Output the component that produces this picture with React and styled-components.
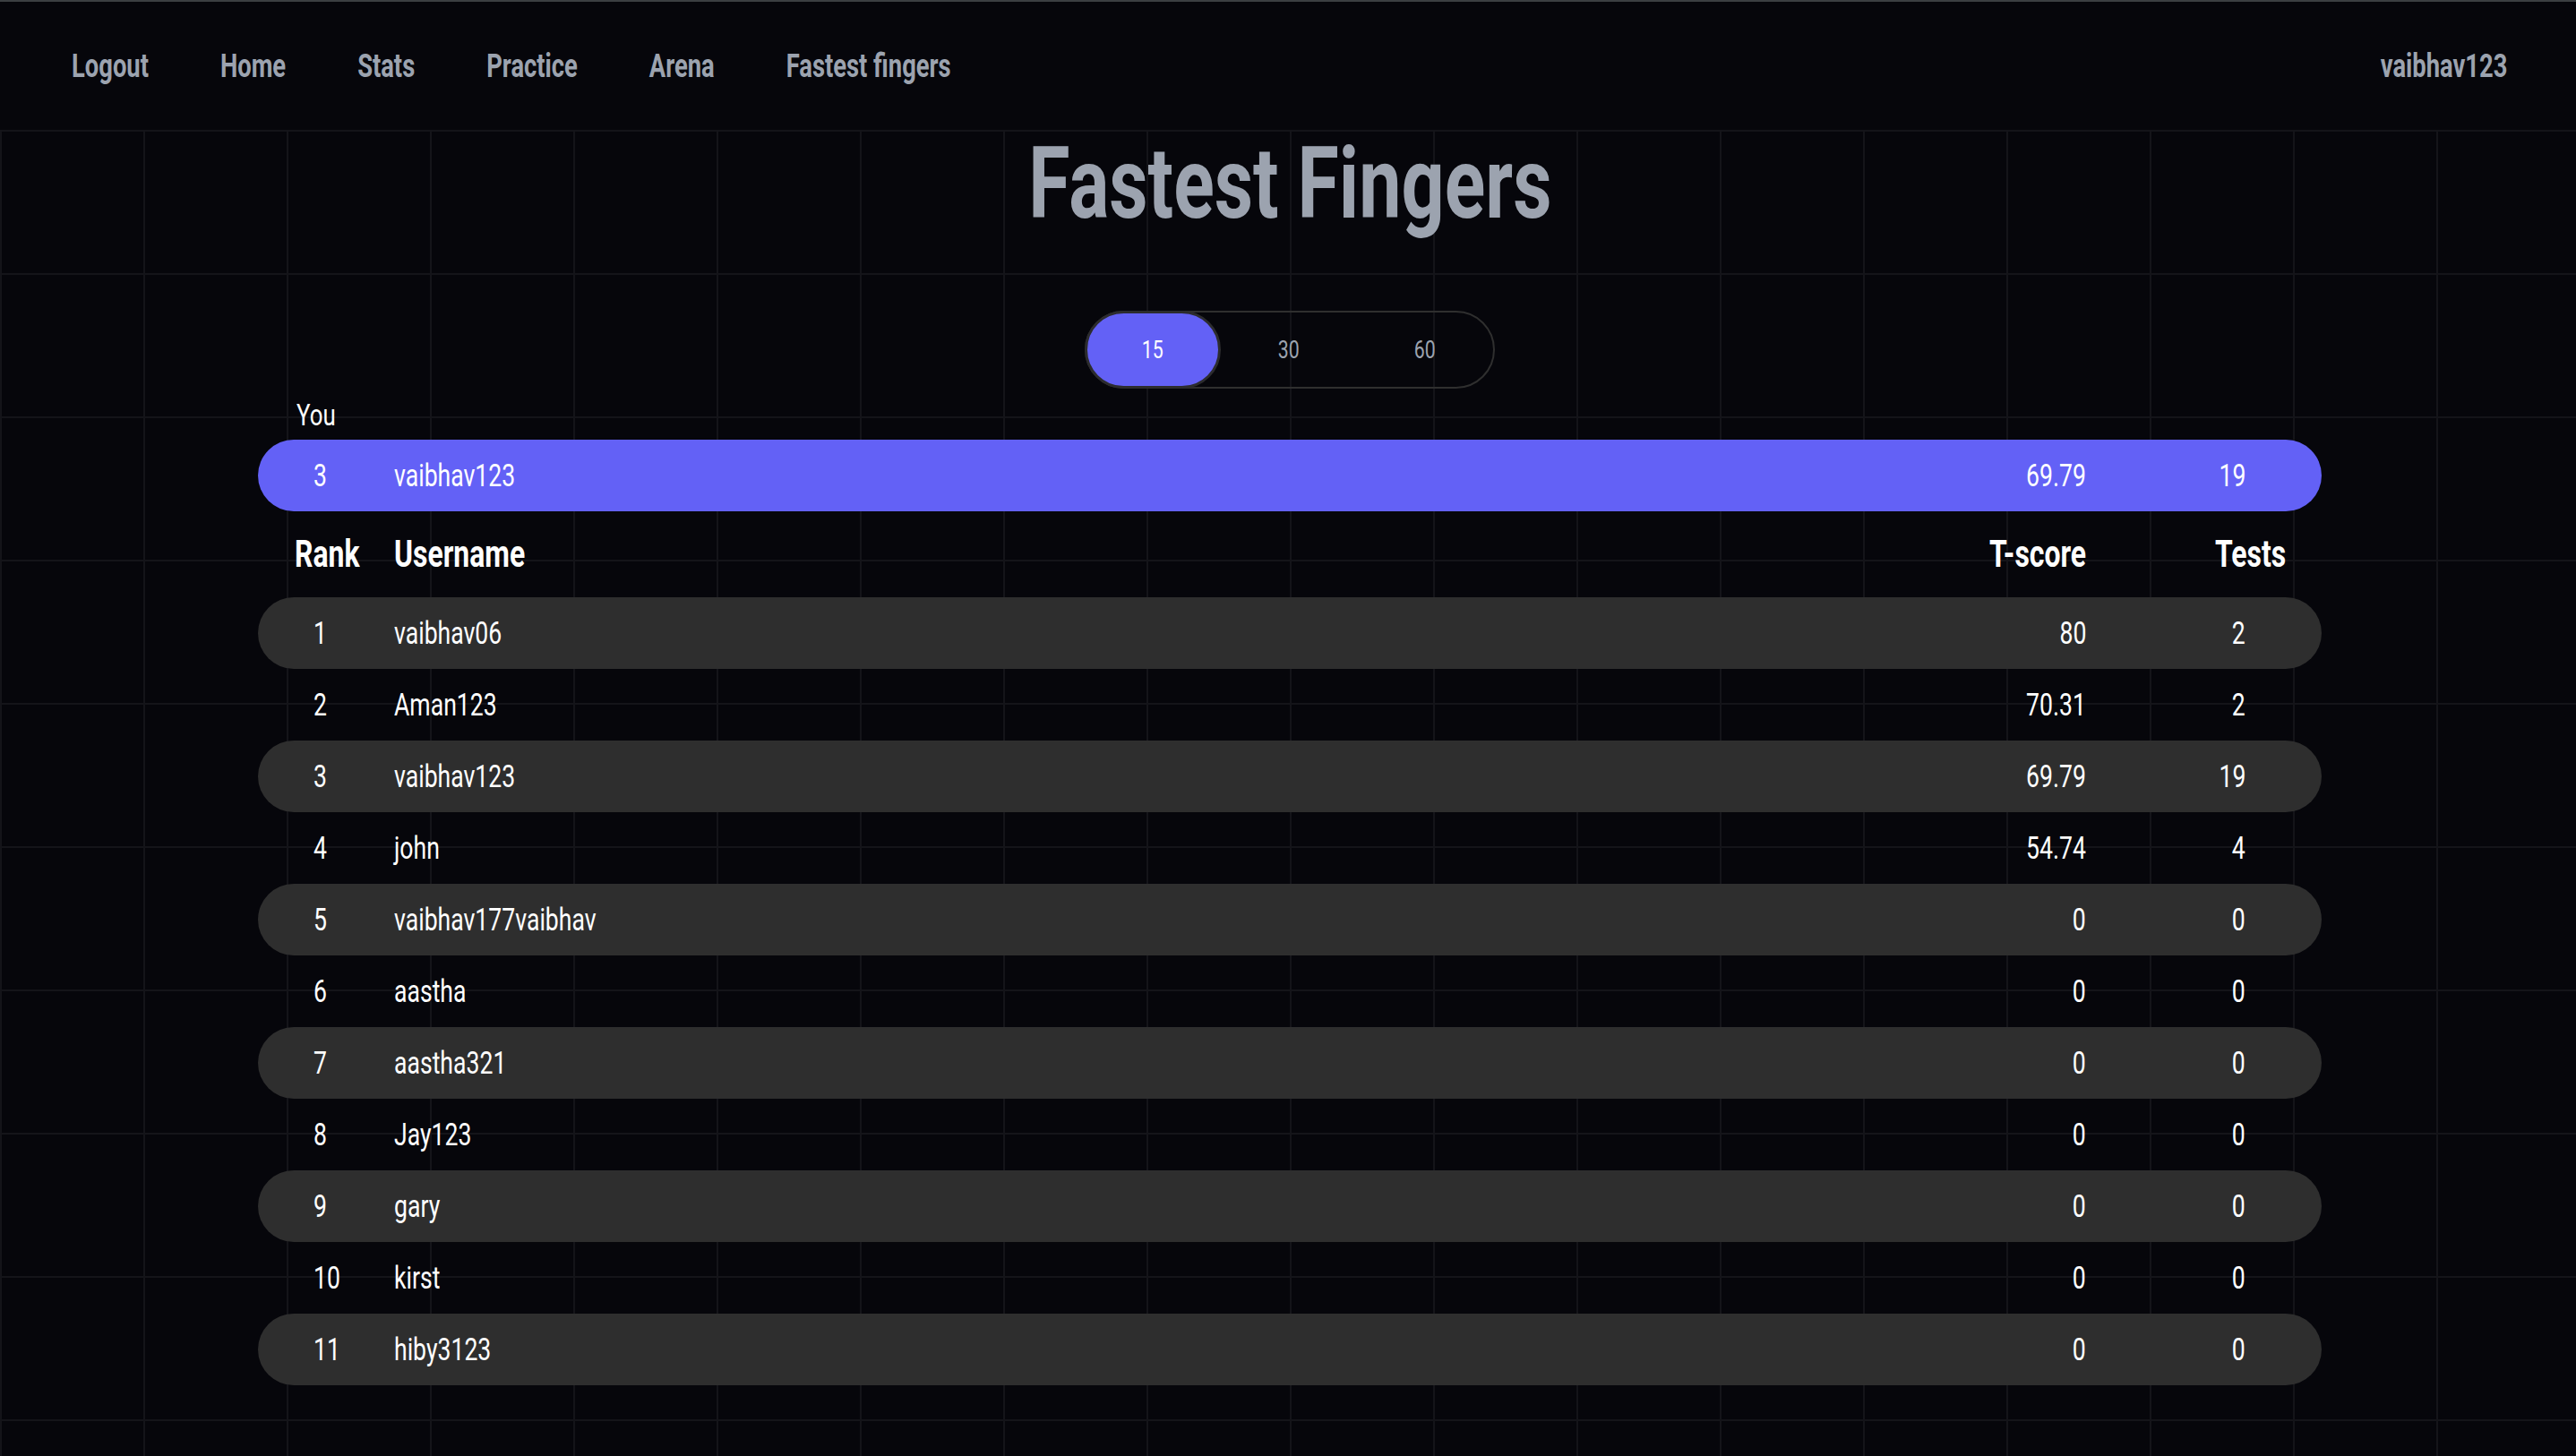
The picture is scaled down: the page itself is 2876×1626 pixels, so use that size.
import React, { useState } from "react";
import styled, { createGlobalStyle } from "styled-components";

// the original face is a very narrow display font, so Roboto gets squeezed
const SQUEEZE = 0.76;

const GlobalStyle = createGlobalStyle`
  html, body {
    margin: 0;
    padding: 0;
    background: #06060b;
  }
  body {
    font-family: Roboto, "Liberation Sans", sans-serif;
  }
`;

const Squeeze = styled.span`
  display: inline-block;
  white-space: nowrap;
  transform: scaleX(${SQUEEZE});
  transform-origin: ${(p) => p.$origin || "left"} center;
`;

const Page = styled.div`
  min-height: 100vh;
  display: flex;
  flex-direction: column;
  background: #06060b;
`;

const TopBar = styled.header`
  height: 143px;
  border-top: 2px solid #3b3f42;
  display: flex;
  align-items: center;
  justify-content: space-between;
  padding: 0 77px 0 80px;
  background: #06060b;
`;

const NavLinks = styled.nav`
  display: flex;
  gap: ${80 / SQUEEZE}px;
  transform: scaleX(${SQUEEZE});
  transform-origin: left center;
`;

const NavLink = styled.a`
  font-size: 36px;
  font-weight: 700;
  line-height: 1;
  color: #9ca3af;
  text-decoration: none;
  white-space: nowrap;
  cursor: pointer;
`;

const Main = styled.main`
  flex: 1;
  display: flex;
  flex-direction: column;
  align-items: center;
  padding: 5px 0 60px 4px;
  background-color: #06060b;
  background-image: linear-gradient(to right, #141419 2px, transparent 2px),
    linear-gradient(to bottom, #141419 2px, transparent 2px);
  background-size: 160px 160px;
`;

const Title = styled.h1`
  margin: 0;
  font-size: 111px;
  font-weight: 700;
  line-height: 1;
  color: #9ca3af;
`;

const Toggle = styled.div`
  margin-top: 86px;
  width: 454px;
  height: 83px;
  display: flex;
  border: 2px solid #2f2f2f;
  border-radius: 44px;
`;

const ToggleOption = styled.button`
  flex: none;
  width: 152px;
  height: ${(p) => (p.$active ? "87px" : "83px")};
  margin: ${(p) => (p.$active ? "-2px 0 -2px -2px" : "0")};
  display: flex;
  align-items: center;
  justify-content: center;
  padding: 0;
  border: ${(p) => (p.$active ? "3px solid #2c2c2e" : "none")};
  border-radius: 44px;
  background: ${(p) => (p.$active ? "#6361f6" : "transparent")};
  color: ${(p) => (p.$active ? "#ffffff" : "#9ca3af")};
  font-family: Roboto, sans-serif;
  font-size: 28px;
  line-height: 1;
  cursor: pointer;
`;

const Board = styled.section`
  align-self: stretch;
  margin: 12px 284px 0;
  display: flex;
  flex-direction: column;
`;

const YouLabel = styled.div`
  padding-left: 43px;
  margin-bottom: 11px;
  font-size: 34px;
  line-height: 1;
  color: #ffffff;
`;

const Row = styled.div`
  height: ${(p) => (p.$header ? "96px" : "80px")};
  display: grid;
  grid-template-columns: ${(p) =>
    p.$header ? "111px 1fr 200px 223px" : "90px 1fr 200px 178px"};
  align-items: center;
  padding: ${(p) => (p.$header ? "0 40px 0 41px" : "0 85px 0 62px")};
  border-radius: 40px;
  background: ${(p) => p.$fill || "transparent"};
  color: #ffffff;
  font-size: ${(p) => (p.$header ? "42px" : "35px")};
  font-weight: ${(p) => (p.$header ? 700 : 400)};
  line-height: 1;
`;

const Cell = styled.div`
  text-align: ${(p) => p.$align || "left"};
  white-space: nowrap;
`;

const players = [
  [1, "vaibhav06", "80", 2],
  [2, "Aman123", "70.31", 2],
  [3, "vaibhav123", "69.79", 19],
  [4, "john", "54.74", 4],
  [5, "vaibhav177vaibhav", "0", 0],
  [6, "aastha", "0", 0],
  [7, "aastha321", "0", 0],
  [8, "Jay123", "0", 0],
  [9, "gary", "0", 0],
  [10, "kirst", "0", 0],
  [11, "hiby3123", "0", 0],
];

const me = [3, "vaibhav123", "69.79", 19];

const Cells = ({ data }) => (
  <>
    <Cell>
      <Squeeze>{data[0]}</Squeeze>
    </Cell>
    <Cell>
      <Squeeze>{data[1]}</Squeeze>
    </Cell>
    <Cell $align="right">
      <Squeeze $origin="right">{data[2]}</Squeeze>
    </Cell>
    <Cell $align="right">
      <Squeeze $origin="right">{data[3]}</Squeeze>
    </Cell>
  </>
);

const App = () => {
  const [time, setTime] = useState(15);

  return (
    <Page>
      <GlobalStyle />
      <TopBar>
        <NavLinks>
          {["Logout", "Home", "Stats", "Practice", "Arena", "Fastest fingers"].map(
            (l) => (
              <NavLink key={l}>{l}</NavLink>
            )
          )}
        </NavLinks>
        <NavLink>
          <Squeeze $origin="right">vaibhav123</Squeeze>
        </NavLink>
      </TopBar>
      <Main>
        <Title>
          <Squeeze $origin="center">Fastest Fingers</Squeeze>
        </Title>
        <Toggle>
          {[15, 30, 60].map((t) => (
            <ToggleOption key={t} $active={time === t} onClick={() => setTime(t)}>
              <Squeeze $origin="center">{t}</Squeeze>
            </ToggleOption>
          ))}
        </Toggle>
        <Board>
          <YouLabel>
            <Squeeze>You</Squeeze>
          </YouLabel>
          <Row $fill="#6361f6">
            <Cells data={me} />
          </Row>
          <Row $header>
            <Cells data={["Rank", "Username", "T-score", "Tests"]} />
          </Row>
          {players.map((p, i) => (
            <Row key={p[0]} $fill={i % 2 === 0 ? "#2e2e2e" : undefined}>
              <Cells data={p} />
            </Row>
          ))}
        </Board>
      </Main>
    </Page>
  );
};

export default App;
